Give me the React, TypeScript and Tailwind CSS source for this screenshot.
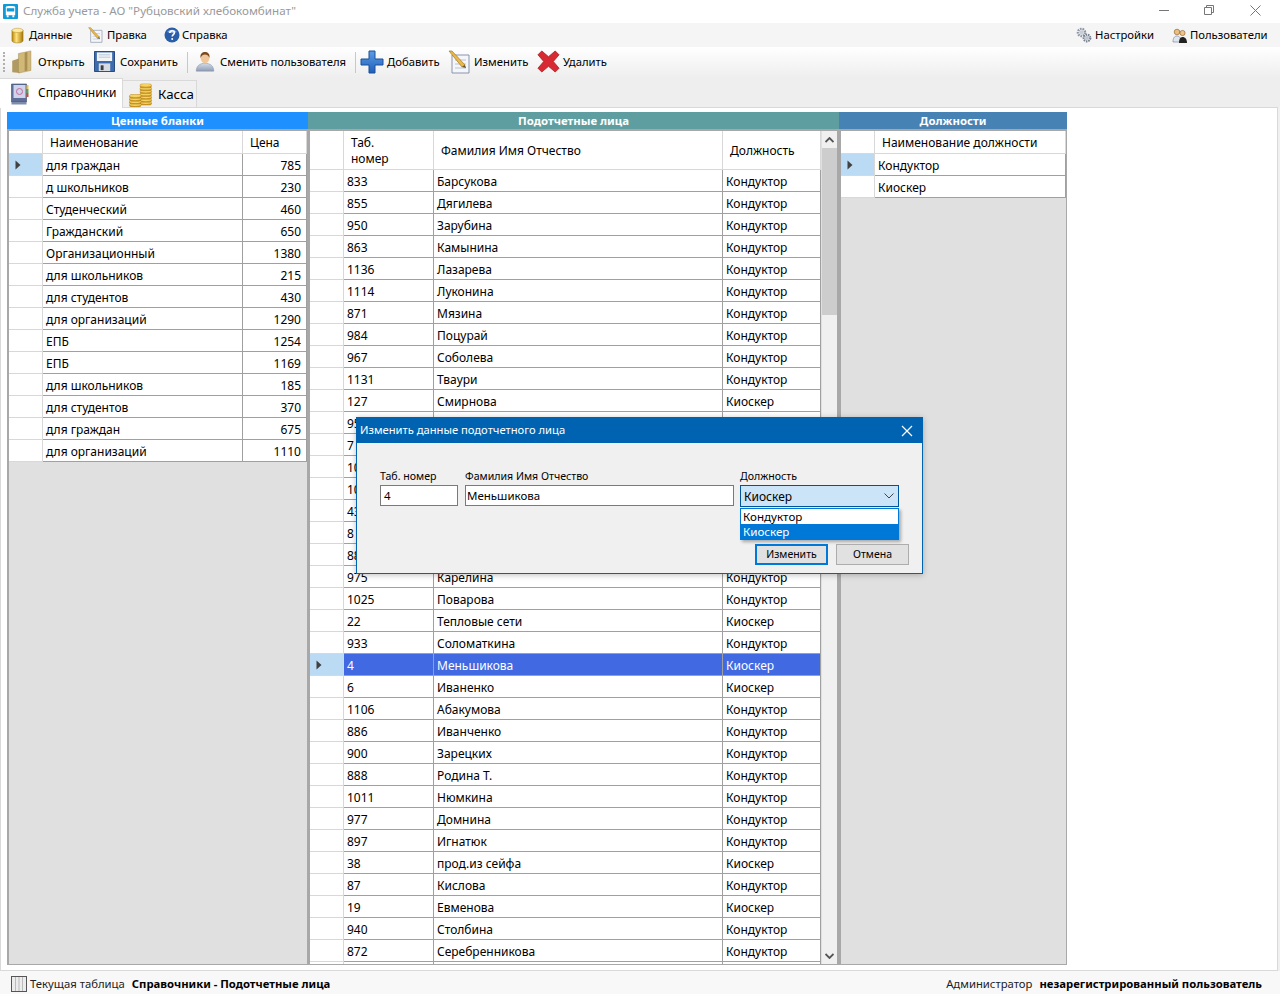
import React from "react";

const FONT = "[font-family:'Liberation_Sans',Arial,sans-serif]";

type Row = string[];

const blanks: Row[] = [
  ["для граждан", "785"],
  ["д школьников", "230"],
  ["Студенческий", "460"],
  ["Гражданский", "650"],
  ["Организационный", "1380"],
  ["для школьников", "215"],
  ["для студентов", "430"],
  ["для организаций", "1290"],
  ["ЕПБ", "1254"],
  ["ЕПБ", "1169"],
  ["для школьников", "185"],
  ["для студентов", "370"],
  ["для граждан", "675"],
  ["для организаций", "1110"],
];

const K = "Кондуктор";
const S = "Киоскер";

const people: Row[] = [
  ["833", "Барсукова", K],
  ["855", "Дягилева", K],
  ["950", "Зарубина", K],
  ["863", "Камынина", K],
  ["1136", "Лазарева", K],
  ["1114", "Луконина", K],
  ["871", "Мязина", K],
  ["984", "Поцурай", K],
  ["967", "Соболева", K],
  ["1131", "Тваури", K],
  ["127", "Смирнова", S],
  // these rows sit behind the dialog, only the first digits show
  ["95", "", ""],
  ["7", "", ""],
  ["10", "", ""],
  ["10", "", ""],
  ["43", "", ""],
  ["8", "", ""],
  ["88", "", ""],
  ["975", "Карелина", K],
  ["1025", "Поварова", K],
  ["22", "Тепловые сети", S],
  ["933", "Соломаткина", K],
  ["4", "Меньшикова", S],
  ["6", "Иваненко", S],
  ["1106", "Абакумова", K],
  ["886", "Иванченко", K],
  ["900", "Зарецких", K],
  ["888", "Родина Т.", K],
  ["1011", "Нюмкина", K],
  ["977", "Домнина", K],
  ["897", "Игнатюк", K],
  ["38", "прод.из сейфа", S],
  ["87", "Кислова", K],
  ["19", "Евменова", S],
  ["940", "Столбина", K],
  ["872", "Серебренникова", K],
];

function RowArrow() {
  return (
    <svg width="6" height="10" viewBox="0 0 6 10">
      <path d="M0.5 0.5L5.5 5L0.5 9.5Z" fill="#404040" />
    </svg>
  );
}

function Cylinder() {
  return (
    <svg width="13" height="17" viewBox="0 0 14 17">
      <defs>
        <linearGradient id="cyl" x1="0" x2="1" y1="0" y2="0">
          <stop offset="0" stopColor="#b8860b" />
          <stop offset="0.4" stopColor="#ffe27a" />
          <stop offset="1" stopColor="#a87808" />
        </linearGradient>
      </defs>
      <path d="M1 3v11c0 1.5 2.5 2.5 6 2.5s6-1 6-2.5V3z" fill="url(#cyl)" stroke="#8a6a10" strokeWidth="0.5" />
      <ellipse cx="7" cy="3" rx="6" ry="2.3" fill="#ffe9a0" stroke="#a98a20" strokeWidth="0.5" />
    </svg>
  );
}

function Note({ size = 16 }: { size?: number }) {
  return (
    <svg width={size} height={size} viewBox="0 0 24 24">
      <path d="M4 5h17v18H4z" fill="#f4f6fb" stroke="#8a94a8" />
      <path d="M7 10h11M7 14h11M7 18h11" stroke="#b9c3d4" />
      <path d="M1 1l3 0 13 14-3 2z" fill="#e8b84a" stroke="#a8791c" strokeWidth="0.7" />
      <path d="M14 17l3-2 1 3z" fill="#553" />
    </svg>
  );
}

function Help() {
  return (
    <svg width="16" height="16" viewBox="0 0 16 16">
      <circle cx="8" cy="8" r="7.5" fill="#2b5ea8" />
      <path d="M3 5a6 5 0 0 1 10 0c-3 1.5-7 1.5-10 0z" fill="#7ea5de" />
      <path d="M5.800 6c0-3 4.600-3 4.600-.2 0 1.800-2.200 1.800-2.200 3.700" fill="none" stroke="#fff" strokeWidth="1.600" />
      <circle cx="8.200" cy="12" r="1" fill="#fff" />
    </svg>
  );
}

function Gears() {
  return (
    <svg width="16" height="16" viewBox="0 0 16 16">
      <circle cx="5.5" cy="5.5" r="3.6" fill="none" stroke="#8c96a4" strokeWidth="2.4" strokeDasharray="1.6 0.9" />
      <circle cx="5.5" cy="5.5" r="2.2" fill="#c7ced8" />
      <circle cx="11" cy="11" r="3.3" fill="none" stroke="#77818f" strokeWidth="2.2" strokeDasharray="1.5 0.8" />
      <circle cx="11" cy="11" r="2" fill="#bcc4cf" />
    </svg>
  );
}

function Users() {
  return (
    <svg width="16" height="16" viewBox="0 0 16 16">
      <circle cx="5" cy="5" r="2.8" fill="#e9bd83" stroke="#8a5a20" strokeWidth="0.6" />
      <path d="M1 15c0-4 1.5-6 4-6s4 2 4 6z" fill="#dfe6f0" stroke="#6b7c96" strokeWidth="0.6" />
      <circle cx="10.5" cy="6" r="2.6" fill="#eec48a" stroke="#8a5a20" strokeWidth="0.6" />
      <path d="M7 16c0-4 1-6 3.500-6s4.500 2 4.500 6z" fill="#222" />
    </svg>
  );
}

function Folder() {
  return (
    <svg width="22" height="24" viewBox="0 0 24 27">
      <path d="M1 12l9-3v17l-9-1z" fill="#b09a63" />
      <path d="M8 4l14-3v22l-14 3z" fill="#d1b877" stroke="#9c8750" strokeWidth="0.5" />
      <path d="M15 3v21l3-1V2z" fill="#a88f52" />
    </svg>
  );
}

function Floppy() {
  return (
    <svg width="21" height="21" viewBox="0 0 22 22">
      <path d="M0.500 0.500h21v21h-21z" fill="#3d6cae" stroke="#22457c" />
      <path d="M3 1.500h16v9H3z" fill="#f4f4f4" />
      <path d="M5 4h12M5 6.500h12" stroke="#b7c5da" />
      <path d="M5 13h12v8H5z" fill="#d8dce2" />
      <path d="M7 15h3v5H7z" fill="#3a3f48" />
    </svg>
  );
}

function Person() {
  return (
    <svg width="20" height="21" viewBox="0 0 22 24">
      <defs>
        <linearGradient id="suit" x1="0" x2="0" y1="0" y2="1">
          <stop offset="0" stopColor="#d4dce8" />
          <stop offset="1" stopColor="#8e9cb4" />
        </linearGradient>
      </defs>
      <path d="M1 23c0-6 4-9 10-9s10 3 10 9z" fill="url(#suit)" stroke="#7786a0" strokeWidth="0.5" />
      <ellipse cx="11" cy="8" rx="5" ry="6" fill="#f0c79b" />
      <path d="M6 8c-1-5 2-7 5-7s6 2 5 7c-1-3-3-4-5-4s-4 1-5 4z" fill="#7a4a20" />
    </svg>
  );
}

function Plus() {
  return (
    <svg width="24" height="24" viewBox="0 0 24 24">
      <defs>
        <linearGradient id="plus" x1="0" x2="0" y1="0" y2="1">
          <stop offset="0" stopColor="#5c9ce6" />
          <stop offset="1" stopColor="#1f5fb8" />
        </linearGradient>
      </defs>
      <path d="M9 1h6v8h8v6h-8v8H9v-8H1V9h8z" fill="url(#plus)" stroke="#1c4f9c" strokeLinejoin="round" />
    </svg>
  );
}

function Cross() {
  return (
    <svg width="23" height="23" viewBox="0 0 24 24">
      <path d="M5 1l7 6 7-6 4 4-6 7 6 7-4 4-7-6-7 6-4-4 6-7-6-7z" fill="#d82a32" stroke="#a01a20" strokeWidth="0.8" strokeLinejoin="round" />
    </svg>
  );
}

function Book() {
  return (
    <svg className="shrink-0" width="20" height="22" viewBox="0 0 19 22">
      <path d="M1 1h15v18H1z" fill="#5d6f97" stroke="#3c4a6c" strokeWidth="0.6" />
      <path d="M3 2h12v13H3z" fill="#cfd3ec" />
      <path d="M1 19h15v2.500H1z" fill="#7f8cab" />
      <circle cx="9" cy="8.500" r="3" fill="none" stroke="#c06a9a" />
      <path d="M16 2h2v4h-2z" fill="#e8c53c" />
      <path d="M16 6h2v4h-2z" fill="#5aa84a" />
      <path d="M16 10h2v4h-2z" fill="#c94a3a" />
    </svg>
  );
}

function Coins() {
  const coin = (x: number, y: number, key: string) => (
    <g key={key}>
      <rect x={x} y={y} width="12" height="4" rx="2" fill="#d19a24" stroke="#9a6d10" strokeWidth="0.4" />
      <ellipse cx={x + 6} cy={y + 1.400} rx="6" ry="1.500" fill="#f4d264" />
    </g>
  );
  return (
    <svg className="shrink-0" width="25" height="25" viewBox="0 0 25 26">
      {[18, 15, 12, 9, 6, 3, 0].map((y, i) => coin(12, y + 2, "a" + i))}
      {[21, 18, 15, 12].map((y, i) => coin(1, y + 1, "b" + i))}
    </svg>
  );
}

function BusLogo() {
  return (
    <svg width="15" height="15" viewBox="0 0 16 16">
      <rect width="16" height="16" rx="1" fill="#0e9bd8" />
      <path d="M3 3.500c0-1 1-1.500 5-1.500s5 .5 5 1.500V12H3z" fill="#fff" />
      <path d="M4 4.500h8V8H4z" fill="#0e9bd8" />
      <path d="M4 12h2v2H4zM10 12h2v2h-2z" fill="#fff" />
    </svg>
  );
}

function GridIcon() {
  return (
    <svg width="16" height="16" viewBox="0 0 16 16">
      <rect x="0.500" y="0.500" width="15" height="15" fill="#ececec" stroke="#555" />
      <path d="M4.500 1v14M8 1v14M11.500 1v14" stroke="#bbb" />
    </svg>
  );
}

function BarItem({ left, gap, icon, label, low }: { left: string; gap: string; icon: React.ReactNode; label: string; low?: boolean }) {
  return (
    <div className={`absolute top-0 bottom-0 flex items-center text-[11.3px] text-black ${left} ${gap}`}>
      {icon}
      <span className={`whitespace-nowrap ${low ? "relative top-px" : ""}`}>{label}</span>
    </div>
  );
}

function Cell({ className = "", selected, children }: { className?: string; selected?: boolean; children?: React.ReactNode }) {
  return (
    <div className={`h-full flex items-center pt-[2px] overflow-hidden whitespace-nowrap border-r border-b border-[#a0a0a0] text-[12px] ${selected ? "bg-[#4169e1] text-white" : "bg-white text-black"} ${className}`}>
      {children}
    </div>
  );
}

function HeadCell({ className = "", children }: { className?: string; children?: React.ReactNode }) {
  return (
    <div className={`h-full flex items-center pt-px border-r border-b border-[#d8d8d8] bg-white text-[12px] leading-[16px] text-black pl-[7px] ${className}`}>
      <div>{children}</div>
    </div>
  );
}

function RowHead({ selected }: { selected?: boolean }) {
  return (
    <div className={`h-full w-[34px] shrink-0 flex items-center pl-[6px] border-r border-b border-[#d8d8d8] ${selected ? "bg-[#bbdaf3]" : "bg-white"}`}>
      {selected && <RowArrow />}
    </div>
  );
}

function PanelTitle({ color, children }: { color: string; children: React.ReactNode }) {
  return <div className={`h-[17px] text-white text-[11.4px] font-bold flex items-center justify-center ${color}`}>{children}</div>;
}

function BlanksPanel() {
  return (
    <div className="w-[301px] flex flex-col">
      <PanelTitle color="bg-[#1e90ff]">Ценные бланки</PanelTitle>
      <div className="h-[836px] bg-[#e0e0e0] border-[#a8a8a8] border-l-2 border-t-2 border-r border-b">
        <div className="flex h-[23px] w-[298px]">
          <RowHead />
          <HeadCell className="w-[200px]">Наименование</HeadCell>
          <HeadCell className="w-[64px]">Цена</HeadCell>
        </div>
        {blanks.map((r, i) => (
          <div key={i} className="flex h-[22px] w-[298px]">
            <RowHead selected={i === 0} />
            <Cell className="w-[200px] pl-[3px]">{r[0]}</Cell>
            <Cell className="w-[64px] justify-end pr-[5px]">{r[1]}</Cell>
          </div>
        ))}
      </div>
    </div>
  );
}

function PeoplePanel() {
  return (
    <div className="w-[531px] flex flex-col">
      <PanelTitle color="bg-[#5f9ea0]">Подотчетные лица</PanelTitle>
      <div className="relative h-[836px] bg-[#e0e0e0] border-[#a8a8a8] border-l-2 border-t-2 border-r-2 border-b overflow-hidden">
        <div className="flex">
          <div className="w-[511px]">
            <div className="flex h-[39px] w-[511px]">
              <RowHead />
              <HeadCell className="w-[90px]">Таб.<br />номер</HeadCell>
              <HeadCell className="w-[289px]">Фамилия Имя Отчество</HeadCell>
              <HeadCell className="w-[98px]">Должность</HeadCell>
            </div>
            {people.map((r, i) => {
              const sel = r[0] === "4" && r[1] !== "";
              return (
                <div key={i} className="flex h-[22px] w-[511px]">
                  <RowHead selected={sel} />
                  <Cell selected={sel} className="w-[90px] pl-[3px]">{r[0]}</Cell>
                  <Cell selected={sel} className="w-[289px] pl-[3px]">{r[1]}</Cell>
                  <Cell selected={sel} className="w-[98px] pl-[3px]">{r[2]}</Cell>
                </div>
              );
            })}
            <div className="flex h-[4px] w-[511px]">
              <RowHead />
              <Cell className="w-[90px]" />
              <Cell className="w-[289px]" />
              <Cell className="w-[98px]" />
            </div>
          </div>
          <div className="w-[15px] ml-px h-[833px] bg-[#f0f0f0] flex flex-col items-center justify-between">
            <div className="h-[17px] flex items-center">
              <svg width="9" height="6" viewBox="0 0 9 6"><path d="M0.500 5L4.500 1L8.500 5" fill="none" stroke="#555" strokeWidth="1.800" /></svg>
            </div>
            <div className="absolute top-[17px] w-[15px] h-[167px] bg-[#cdcdcd]" />
            <div className="h-[17px] flex items-center">
              <svg width="9" height="6" viewBox="0 0 9 6"><path d="M0.500 1L4.500 5L8.500 1" fill="none" stroke="#555" strokeWidth="1.800" /></svg>
            </div>
          </div>
        </div>
      </div>
    </div>
  );
}

function PositionsPanel() {
  return (
    <div className="w-[228px] flex flex-col">
      <PanelTitle color="bg-[#4682b4]">Должности</PanelTitle>
      <div className="h-[836px] bg-[#e0e0e0] border-[#a8a8a8] border-l-2 border-t-2 border-r border-b">
        <div className="flex h-[23px] w-[225px]">
          <RowHead />
          <HeadCell className="w-[191px]">Наименование должности</HeadCell>
        </div>
        {[K, S].map((n, i) => (
          <div key={n} className="flex h-[22px] w-[225px]">
            <RowHead selected={i === 0} />
            <Cell className="w-[191px] pl-[3px]">{n}</Cell>
          </div>
        ))}
      </div>
    </div>
  );
}

function EditDialog() {
  return (
    <div className="absolute left-[356px] top-[417px] w-[567px] h-[157px] border border-[#0063b1] bg-[#f0f0f0] shadow-[0_1px_6px_rgba(0,0,0,0.25)]">
      <div className="h-[25px] bg-[#0063b1] flex items-center justify-between pl-[3px] pr-[9px] text-white text-[11.200px]">
        <span>Изменить данные подотчетного лица</span>
        <svg width="12" height="12" viewBox="0 0 12 12"><path d="M1 1l10 10M11 1L1 11" stroke="#fff" strokeWidth="1.200" /></svg>
      </div>
      <div className="relative text-[10.600px] leading-[13px] text-black">
        <span className="absolute left-[23px] top-[27px]">Таб. номер</span>
        <span className="absolute left-[108px] top-[27px]">Фамилия Имя Отчество</span>
        <span className="absolute left-[383px] top-[27px]">Должность</span>
        <div className="absolute left-[23px] top-[42px] w-[78px] h-[21px] bg-white border border-[#7a7a7a] pl-[3px] flex items-center text-[11.500px]">4</div>
        <div className="absolute left-[108px] top-[42px] w-[269px] h-[21px] bg-white border border-[#7a7a7a] pl-px flex items-center text-[11.500px]">Меньшикова</div>
        <div className="absolute left-[383px] top-[42px] w-[159px] h-[22px] bg-[#cce4f7] border border-[#005499] pl-[3px] pr-[4px] flex items-center justify-between text-[12px]">
          <span>Киоскер</span>
          <svg width="10" height="6" viewBox="0 0 10 6"><path d="M0.500 0.500L5 5L9.500 0.500" fill="none" stroke="#444" /></svg>
        </div>
        <div className="absolute left-[383px] top-[65px] w-[159px] h-[32px] bg-white border border-[#0078d7] shadow-[2px_2px_3px_rgba(0,0,0,0.3)] text-[11.600px] leading-[15px]">
          <div className="h-[15px] pl-[2px]">Кондуктор</div>
          <div className="h-[15px] pl-[2px] bg-[#0078d7] text-white">Киоскер</div>
        </div>
        <div className="absolute left-[398px] top-[101px] w-[73px] h-[21px] border-2 border-[#0078d7] bg-[#e1e1e1] flex items-center justify-center text-[10.500px]">Изменить</div>
        <div className="absolute left-[479px] top-[101px] w-[73px] h-[21px] border border-[#adadad] bg-[#e1e1e1] flex items-center justify-center text-[10.500px]">Отмена</div>
      </div>
    </div>
  );
}

export default function App() {
  return (
    <div className={`relative w-[1280px] h-[994px] overflow-hidden bg-[#f0f0f0] ${FONT}`}>
      {/* title bar */}
      <div className="h-[23px] bg-white flex items-center pl-[3px] relative">
        <BusLogo />
        <span className="relative -top-px ml-[5px] text-[11.650px] text-[#9a9a9a]">Служба учета - АО "Рубцовский хлебокомбинат"</span>
        <svg className="absolute left-[1159px] top-[10px]" width="10" height="1"><path d="M0 .5h10" stroke="#777" /></svg>
        <svg className="absolute left-[1204px] top-[5px]" width="10" height="10" viewBox="0 0 10 10"><path d="M2.500 2.500V.5h7v7h-2M.5 2.500h7v7h-7z" fill="none" stroke="#777" /></svg>
        <svg className="absolute left-[1250px] top-[5px]" width="11" height="11" viewBox="0 0 11 11"><path d="M.5.5l10 10M10.500.5l-10 10" stroke="#777" /></svg>
      </div>

      {/* menu */}
      <div className="h-[24px] bg-[#f5f5f5] relative">
        <BarItem left="left-[11px]" gap="gap-[5px]" icon={<Cylinder />} label="Данные" />
        <BarItem left="left-[88px]" gap="gap-[3px]" icon={<Note />} label="Правка" />
        <BarItem left="left-[164px]" gap="gap-[2px]" icon={<Help />} label="Справка" />
        <BarItem left="left-[1076px]" gap="gap-[3px]" icon={<Gears />} label="Настройки" />
        <BarItem left="left-[1172px]" gap="gap-[2px]" icon={<Users />} label="Пользователи" />
      </div>

      {/* toolbar */}
      <div className="h-[31px] bg-gradient-to-b from-white to-[#eeeeee] relative">
        <div className="absolute inset-x-0 top-0 h-[29px]">
          <div className="absolute left-[3px] top-[5px] h-[20px] border-l-2 border-dotted border-[#b0b0b0]" />
          <BarItem low left="left-[11px]" gap="gap-[5px]" icon={<Folder />} label="Открыть" />
          <BarItem low left="left-[94px]" gap="gap-[5px]" icon={<Floppy />} label="Сохранить" />
          <div className="absolute left-[187px] top-[5px] h-[21px] border-l border-[#c8c8c8]" />
          <BarItem low left="left-[195px]" gap="gap-[5px]" icon={<Person />} label="Сменить пользователя" />
          <div className="absolute left-[355px] top-[5px] h-[21px] border-l border-[#c8c8c8]" />
          <BarItem low left="left-[360px]" gap="gap-[3px]" icon={<Plus />} label="Добавить" />
          <BarItem low left="left-[448px]" gap="gap-[2px]" icon={<Note size={24} />} label="Изменить" />
          <BarItem low left="left-[537px]" gap="gap-[3px]" icon={<Cross />} label="Удалить" />
        </div>
      </div>

      {/* tabs */}
      <div className="h-[29px] relative bg-[#eeeeee]">
        <div className="absolute left-0 top-0 w-[123px] h-[30px] bg-white border-t border-r border-[#d9d9d9] flex items-center pl-[10px] gap-[8px] z-10 text-[12px] text-black">
          <Book />
          <span className="relative -top-px">Справочники</span>
        </div>
        <div className="absolute left-[123px] top-[2px] w-[74px] h-[27px] bg-[#f0f0f0] border-t border-r border-[#d9d9d9] flex items-center pl-[5px] gap-[5px] text-[13.300px] text-black">
          <Coins />
          <span className="relative top-px">Касса</span>
        </div>
      </div>

      {/* tab body */}
      <div className="h-[864px] w-[1278px] bg-white border border-[#d9d9d9] pt-[4px] pl-[6px] flex items-start">
        <BlanksPanel />
        <PeoplePanel />
        <PositionsPanel />
      </div>

      {/* status */}
      <div className="absolute left-0 top-[971px] w-full h-[23px] bg-[#f8f8f8] flex items-center pt-[2px] text-[11.300px] text-black">
        <div className="ml-[11px] flex items-center gap-[3px]">
          <GridIcon />
          <span className="relative top-px text-[#222]">Текущая таблица</span>
          <span className="relative top-px ml-[4px] font-bold">Справочники - Подотчетные лица</span>
        </div>
        <div className="relative top-px ml-auto mr-[18px] flex gap-[7px]">
          <span className="text-[#222]">Администратор</span>
          <span className="font-bold">незарегистрированный пользователь</span>
        </div>
      </div>

      <EditDialog />
    </div>
  );
}
